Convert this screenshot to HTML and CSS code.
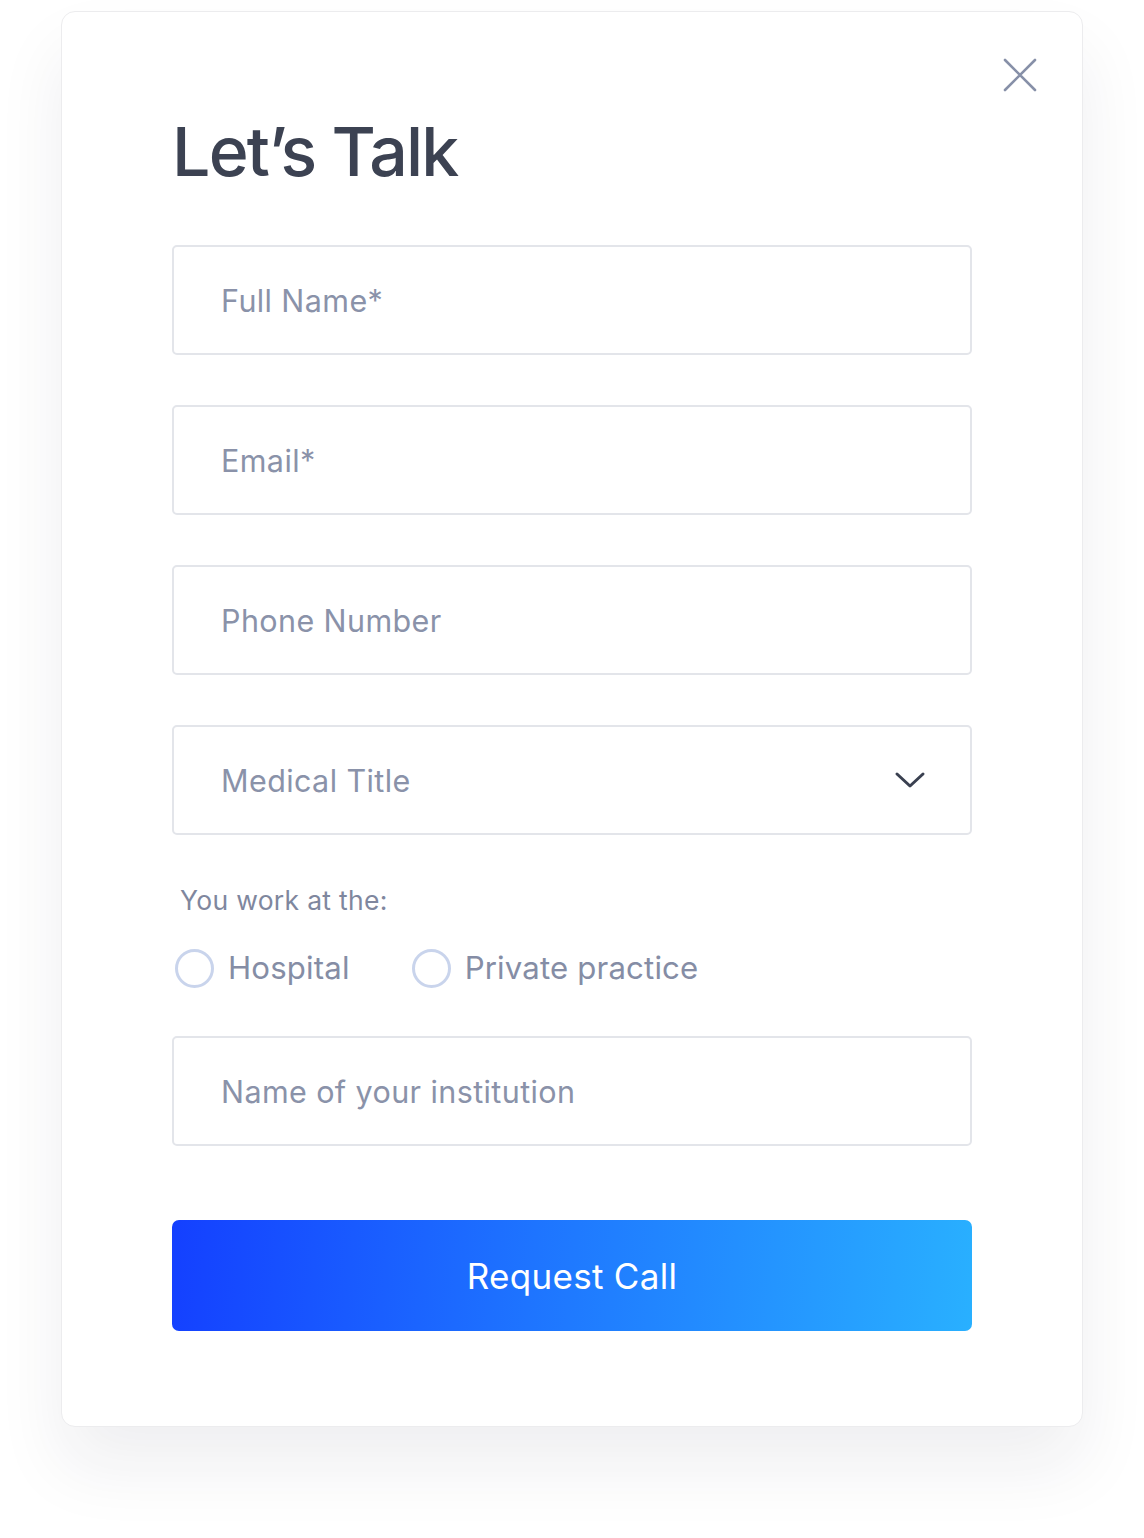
FILE: index.html
```html
<!DOCTYPE html>
<html lang="en">
<head>
<meta charset="utf-8">
<title>Let's Talk</title>
<link rel="stylesheet" href="styles.css">
</head>
<body>
<div class="card">
  <button class="close" aria-label="Close">
    <svg width="34" height="34" viewBox="0 0 34 34"><path d="M2 2 L32 32 M32 2 L2 32" stroke="#8790a8" stroke-width="2.6" stroke-linecap="round" fill="none"/></svg>
  </button>
  <h1 class="title">Let’s Talk</h1>
  <form class="form">
    <div class="field"><span class="ph">Full Name*</span></div>
    <div class="field"><span class="ph">Email*</span></div>
    <div class="field"><span class="ph">Phone Number</span></div>
    <div class="field select"><span class="ph">Medical Title</span>
      <svg class="chev" width="32" height="20" viewBox="0 0 32 20"><path d="M3 4 L16 16 L29 4" stroke="#3a4050" stroke-width="3" stroke-linecap="round" stroke-linejoin="round" fill="none"/></svg>
    </div>
    <div class="work">
      <div class="work-label">You work at the:</div>
      <div class="radios">
        <label class="radio"><span class="dot"></span>Hospital</label>
        <label class="radio"><span class="dot"></span>Private practice</label>
      </div>
    </div>
    <div class="field"><span class="ph">Name of your institution</span></div>
    <button type="button" class="submit">Request Call</button>
  </form>
</div>
</body>
</html>
```
FILE: styles.css
```css
html, body {
  margin: 0;
  padding: 0;
  background: #ffffff;
}
body {
  font-family: Inter, "Noto Sans", sans-serif;
  width: 1144px;
  height: 1538px;
  overflow: hidden;
}
.card {
  position: relative;
  box-sizing: border-box;
  margin: 11px 0 0 61px;
  width: 1022px;
  height: 1416px;
  background: #fff;
  border: 1px solid #ececee;
  border-radius: 14px;
  box-shadow: 0 40px 70px rgba(30, 35, 60, 0.07);
  padding: 0 110px 0 110px;
}
.close {
  position: absolute;
  top: 46px;
  right: 45px;
  width: 34px;
  height: 34px;
  padding: 0;
  border: 0;
  background: none;
}
.close svg { display: block; }
.title {
  margin: 0;
  padding-top: 99px;
  font-size: 68px;
  font-weight: 500;
  line-height: 80px;
  letter-spacing: -1.8px;
  color: #3c4252;
}
.form {
  margin-top: 54px;
  display: flex;
  flex-direction: column;
  gap: 50px;
}
.field {
  box-sizing: border-box;
  height: 110px;
  border: 2px solid #e3e5ea;
  border-radius: 5px;
  display: flex;
  align-items: center;
  justify-content: space-between;
  padding: 0 44px 0 47px;
}
.ph {
  font-size: 30.5px;
  color: #8a92a9;
  letter-spacing: 0.4px;
}
.chev { display: block; }
.work {
  margin-top: -1px;
  margin-bottom: -2px;
  padding-left: 3px;
}
.work-label {
  padding-left: 5px;
  font-size: 26.5px;
  letter-spacing: 0.3px;
  line-height: 32px;
  color: #7f879e;
}
.radios {
  margin-top: 32px;
  display: flex;
  gap: 62px;
}
.radio {
  display: flex;
  align-items: center;
  gap: 14px;
  font-size: 31.2px;
  letter-spacing: 0.15px;
  line-height: 40px;
  color: #858da5;
}
.dot {
  box-sizing: border-box;
  width: 39px;
  height: 39px;
  border: 3px solid #c9d4ec;
  border-radius: 50%;
}
.submit {
  margin-top: 24px;
  height: 111px;
  border: 0;
  border-radius: 7px;
  background: linear-gradient(95deg, #1440ff 0%, #1e74ff 45%, #29b0ff 100%);
  color: #fff;
  font-family: Inter, "Noto Sans", sans-serif;
  font-size: 35px;
  letter-spacing: 0.3px;
}
```
